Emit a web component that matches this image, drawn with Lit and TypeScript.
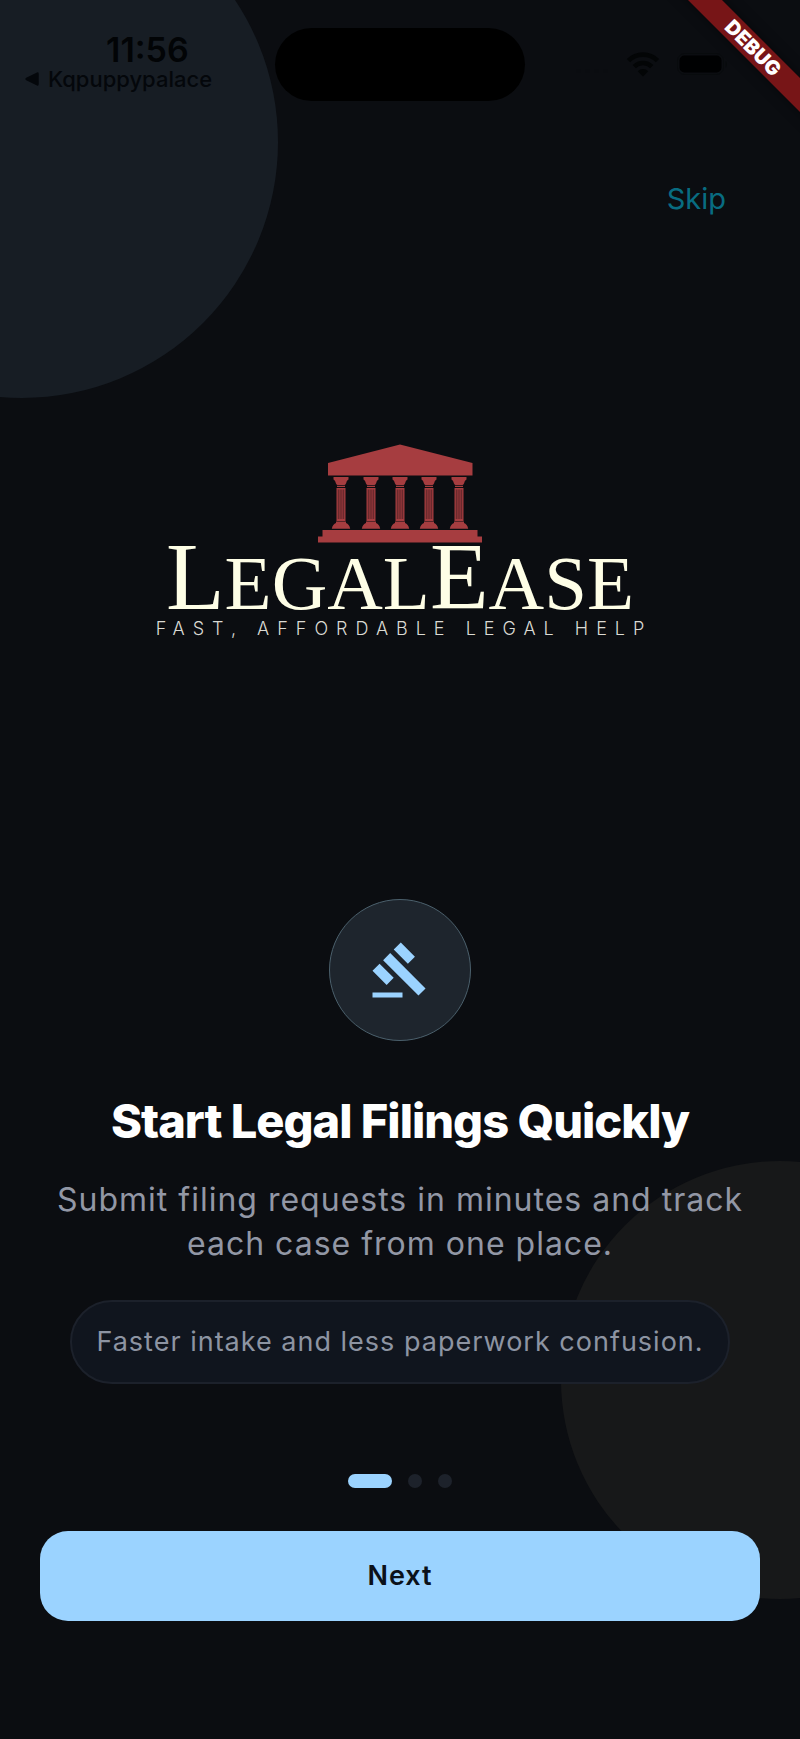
import { LitElement, html, css, svg } from "lit";
import { customElement, state } from "lit/decorators.js";

interface Step {
  title: string;
  text: string;
  note: string;
}

const STEPS: Step[] = [
  {
    title: "Start Legal Filings Quickly",
    text: "Submit filing requests in minutes and track each case from one place.",
    note: "Faster intake and less paperwork confusion.",
  },
];

const COLUMN_CENTERS = [23, 53, 82, 111, 141];

@customElement("status-bar")
export class StatusBar extends LitElement {
  static styles = css`
    :host {
      display: grid;
      grid-template-columns: 1fr 250px 1fr;
      align-items: start;
      padding: 28px 24px 0;
      color: #020406;
    }
    .left {
      display: flex;
      flex-direction: column;
      padding-top: 4px;
    }
    .time {
      font-size: 34px;
      line-height: 36px;
      font-weight: 600;
      padding-left: 82px;
    }
    .back {
      display: flex;
      align-items: center;
      gap: 9px;
      font-size: 22px;
      line-height: 22px;
      font-weight: 500;
      color: #04070b;
      text-decoration: none;
    }
    .island {
      height: 73px;
      border-radius: 37px;
      background: #000;
    }
    .right {
      display: flex;
      justify-content: flex-end;
      align-items: center;
      gap: 17px;
      padding: 23px 48px 0 0;
    }
    .right svg {
      display: block;
    }
  `;

  render() {
    return html`
      <div class="left">
        <span class="time">11:56</span>
        <a class="back" href="#">
          <svg width="15" height="14" viewBox="0 0 15 14" fill="currentColor" aria-hidden="true">
            <path d="M13 .6a1.200 1.200 0 0 1 1.700 1.100v10.600a1.200 1.200 0 0 1-1.700 1.100L2.200 8.200a1.300 1.300 0 0 1 0-2.400z" />
          </svg>
          <span>Kqpuppypalace</span>
        </a>
      </div>
      <div class="island"></div>
      <div class="right">
        <svg width="34" height="26" viewBox="0 0 34 26" aria-label="Cellular">
          <path d="M1 18h5v4H1zM10 18h5v4h-5zM19 18h5v4h-5zM28 18h5v4h-5z" fill="#0a0c10" />
        </svg>
        <svg width="34" height="26" viewBox="0 0 34 26" aria-label="Wi-Fi">
          <g fill="none" stroke="#030506" stroke-width="4.600">
            <path d="M2.500 9.600a20.500 20.500 0 0 1 29 0" />
            <path d="M8.300 15.600a12.300 12.300 0 0 1 17.400 0" />
          </g>
          <path d="M17 25.500l-5.200-5.300a7.400 7.400 0 0 1 10.400 0z" fill="#030506" />
        </svg>
        <svg width="51" height="22" viewBox="0 0 51 22" aria-label="Battery">
          <rect x=".5" y=".5" width="46" height="21" rx="7" fill="none" stroke="#080b0d" />
          <rect x="2.500" y="2.500" width="42" height="17" rx="5" fill="#000102" />
          <path d="M48.500 8v6.500c2-.6 2-5.900 0-6.500z" fill="#080b0d" />
        </svg>
      </div>
    `;
  }
}

@customElement("brand-logo")
export class BrandLogo extends LitElement {
  static styles = css`
    :host {
      display: flex;
      flex-direction: column;
      align-items: center;
    }
    .temple {
      display: block;
      width: 164px;
      height: 99px;
    }
    .name {
      margin: 0;
      font-family: "Liberation Serif", "Times New Roman", serif;
      font-weight: 400;
      font-size: 77px;
      line-height: 68px;
      color: #fefee6;
      white-space: nowrap;
    }
    .cap {
      font-size: 96px;
    }
    .tagline {
      margin: 0;
      padding-left: 8px;
      font-family: Inter, sans-serif;
      font-weight: 300;
      font-size: 18px;
      line-height: 24px;
      letter-spacing: 8px;
      color: #dadad4;
      white-space: nowrap;
    }
  `;

  private column(cx: number) {
    return svg`
      <g transform="translate(${cx} 0)">
        <path fill="#a63d40" d="M-7.500 33h15v2.500c-1 .6-1.800 1.600-2.200 3.200-.3 1.300-1 2-1.800 2.300h-7c-.8-.3-1.500-1-1.800-2.300-.4-1.600-1.200-2.600-2.200-3.200z" />
        <path fill="#a63d40" d="M-4 41.700h8v1.400h-8zM-4.500 44h9v33h-9zM-5 77.500H5v1.500c2 .8 3.600 2.500 4.200 5.800H-9.200c.6-3.300 2.200-5 4.200-5.800z" />
        <path stroke="#4a2023" stroke-width=".8" d="M-2.700 45.500v29.500M-.9 45.500v29.500M.9 45.500v29.500M2.700 45.500v29.500" />
      </g>`;
  }

  render() {
    return html`
      <svg class="temple" viewBox="0 0 164 99" aria-hidden="true">
        <path fill="#a63d40" d="M82 .5 154.500 19v12.500H10V19z" />
        ${COLUMN_CENTERS.map((cx) => this.column(cx))}
        <path fill="#a63d40" d="M4.500 86h155v6.500h4.500V98.500H0V92.500h4.500z" />
      </svg>
      <h1 class="name"><span class="cap">L</span>EGAL<span class="cap">E</span>ASE</h1>
      <p class="tagline">FAST, AFFORDABLE LEGAL HELP</p>
    `;
  }
}

@customElement("app-root")
export class AppRoot extends LitElement {
  static styles = css`
    :host {
      display: block;
      font-family: Inter, "Noto Sans", sans-serif;
    }
    .screen {
      position: relative;
      overflow: hidden;
      box-sizing: border-box;
      min-height: 100vh;
      display: flex;
      flex-direction: column;
      background: #0b0d11;
      isolation: isolate;
    }
    .orb {
      position: absolute;
      z-index: -1;
      border-radius: 50%;
    }
    .orb-top {
      width: 512px;
      height: 512px;
      top: -114px;
      left: -234px;
      background: #171d24;
    }
    .orb-bottom {
      width: 438px;
      height: 438px;
      right: -199px;
      bottom: 140px;
      background: #171819;
    }
    .ribbon {
      position: absolute;
      top: 36px;
      right: -53px;
      width: 200px;
      height: 24px;
      transform: rotate(45deg);
      background: #771517;
      box-shadow: 0 0 12px rgba(0, 0, 0, 0.5);
      color: #fff;
      font-size: 20px;
      line-height: 24px;
      font-weight: 900;
      text-align: center;
    }
    .top {
      display: flex;
      justify-content: flex-end;
      padding: 74px 74px 0;
    }
    button {
      font: inherit;
      border: 0;
      cursor: pointer;
    }
    .skip {
      padding: 0;
      background: none;
      color: #086c81;
      font-size: 29px;
      line-height: 48px;
      font-weight: 400;
    }
    .hero {
      flex: 1;
      display: flex;
      align-items: center;
      justify-content: center;
      padding-bottom: 38px;
    }
    .content {
      display: flex;
      flex-direction: column;
      align-items: center;
      padding: 0 40px;
      text-align: center;
    }
    .badge {
      box-sizing: border-box;
      width: 142px;
      height: 142px;
      border: 1px solid #4b606c;
      border-radius: 50%;
      background: #1e252d;
      display: flex;
      align-items: center;
      justify-content: center;
    }
    .title {
      margin: 50px 0 0;
      font-size: 47px;
      line-height: 60px;
      font-weight: 800;
      letter-spacing: -1px;
      color: #fff;
    }
    .text {
      margin: 27px 0 0;
      font-size: 32px;
      line-height: 44px;
      letter-spacing: 1px;
      color: #9297a5;
    }
    .note {
      box-sizing: border-box;
      margin: 34px 0 0;
      padding: 0 24px;
      border: 2px solid #1c212b;
      border-radius: 42px;
      background: #10151e;
      font-size: 27px;
      line-height: 80px;
      letter-spacing: 1px;
      color: #8d94a2;
    }
    .dots {
      display: flex;
      justify-content: center;
      gap: 16px;
      margin-top: 90px;
    }
    .dot {
      width: 14px;
      height: 14px;
      padding: 0;
      border-radius: 7px;
      background: #1d222b;
    }
    .dot.active {
      width: 44px;
      background: #9bd3ff;
    }
    .footer {
      display: flex;
      padding: 43px 40px 118px;
    }
    .next {
      flex: 1;
      padding: 0;
      border-radius: 28px;
      background: #9bd3ff;
      color: #0b1119;
      font-size: 27px;
      line-height: 90px;
      font-weight: 600;
      letter-spacing: 1px;
    }
  `;

  @state() private page = 0;

  private go(page: number) {
    this.page = Math.min(2, page);
  }

  render() {
    const step = STEPS[this.page] ?? STEPS[0];
    return html`
      <main class="screen">
        <div class="orb orb-top"></div>
        <div class="orb orb-bottom"></div>
        <status-bar></status-bar>
        <div class="top">
          <button class="skip" type="button" @click=${() => this.go(2)}>Skip</button>
        </div>
        <div class="hero"><brand-logo></brand-logo></div>
        <section class="content">
          <div class="badge">
            <svg width="60" height="60" viewBox="0 0 24 24" fill="#9bd3ff" aria-hidden="true">
              <path d="M1 21h12v2H1zM5.245 8.070l2.830-2.827 14.140 14.142-2.828 2.828zM12.317 1l5.657 5.656-2.830 2.830-5.654-5.660zM3.825 9.485l5.657 5.657-2.828 2.828-5.657-5.657z" />
            </svg>
          </div>
          <h2 class="title">${step.title}</h2>
          <p class="text">${step.text}</p>
          <p class="note">${step.note}</p>
        </section>
        <nav class="dots" aria-label="Onboarding steps">
          ${[0, 1, 2].map(
            (i) => html`<button
              class="dot ${i === this.page ? "active" : ""}"
              type="button"
              aria-label="Step ${i + 1}"
              @click=${() => this.go(i)}
            ></button>`
          )}
        </nav>
        <div class="footer">
          <button class="next" type="button" @click=${() => this.go(this.page + 1)}>Next</button>
        </div>
        <div class="ribbon">DEBUG</div>
      </main>
    `;
  }
}
